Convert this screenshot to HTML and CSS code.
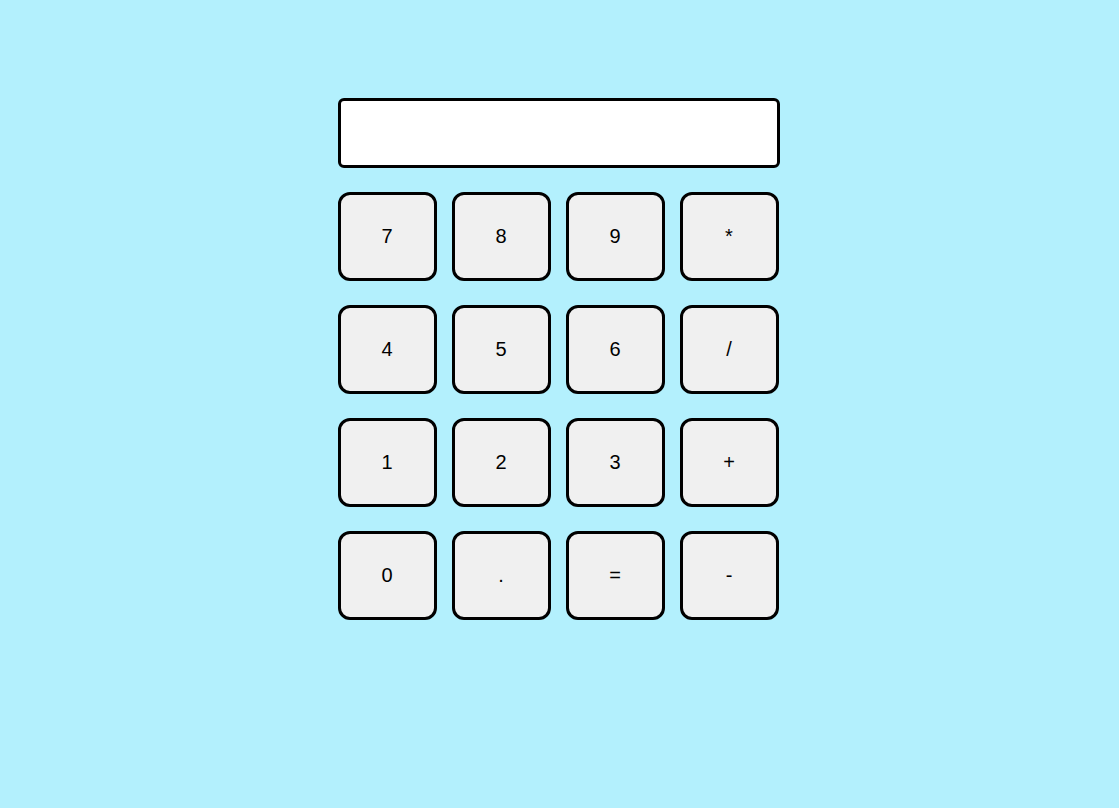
FILE: index.html
```html
<!DOCTYPE html>
<html>
<head>
<meta charset="utf-8">
<link rel="stylesheet" href="styles.css">
</head>
<body>
<div class="calc">
  <div class="display"></div>
  <div class="keys">
    <button class="key">7</button>
    <button class="key">8</button>
    <button class="key">9</button>
    <button class="key">*</button>
    <button class="key">4</button>
    <button class="key">5</button>
    <button class="key">6</button>
    <button class="key">/</button>
    <button class="key">1</button>
    <button class="key">2</button>
    <button class="key">3</button>
    <button class="key">+</button>
    <button class="key">0</button>
    <button class="key">.</button>
    <button class="key">=</button>
    <button class="key">-</button>
  </div>
</div>
</body>
</html>
```
FILE: styles.css
```css
html, body {
  margin: 0;
  padding: 0;
  background: #b3f0fd;
  font-family: "Liberation Sans", Arial, sans-serif;
}
.calc {
  width: 442px;
  margin: 98px auto 0;
  display: flex;
  flex-direction: column;
  gap: 24px;
  transform: translateX(-1px);
}
.display {
  height: 64px;
  background: #ffffff;
  border: 3px solid #000;
  border-radius: 6px;
}
.keys {
  display: grid;
  grid-template-columns: repeat(4, 99px);
  column-gap: 15px;
  row-gap: 24px;
}
.key {
  height: 89px;
  background: #f0f0f0;
  border: 3px solid #000;
  border-radius: 12px;
  font-family: "Liberation Sans", Arial, sans-serif;
  font-size: 20px;
  color: #000;
  padding: 0;
}
```
